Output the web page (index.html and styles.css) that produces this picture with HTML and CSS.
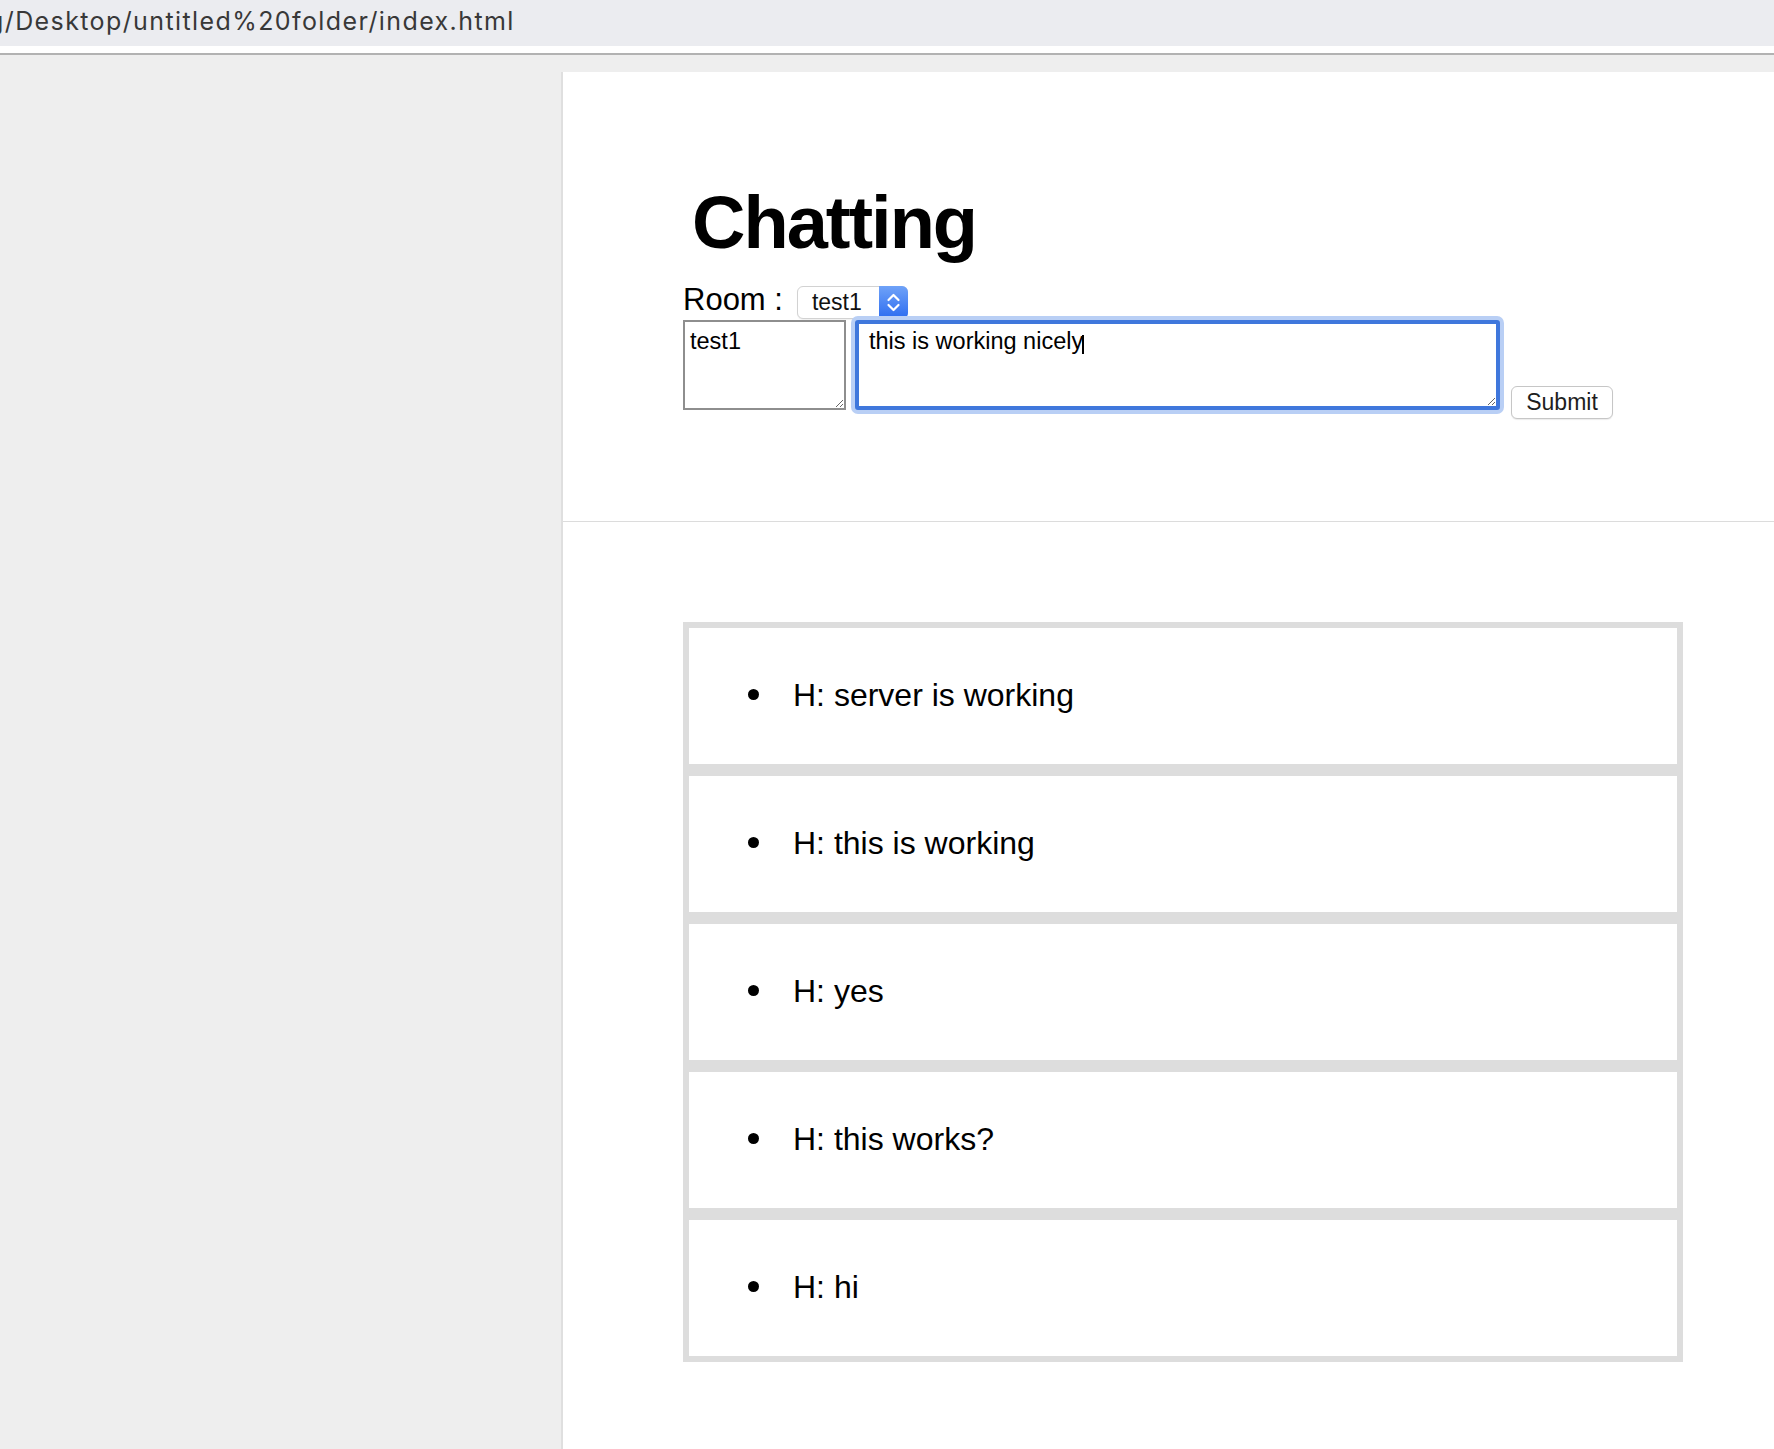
FILE: index.html
```html
<!DOCTYPE html>
<html lang="en">
<head>
<meta charset="utf-8">
<title>Chatting</title>
<link rel="stylesheet" href="styles.css">
</head>
<body>
<div class="topbar">
  <span class="url">g/Desktop/untitled%20folder/index.html</span>
</div>
<div class="viewport">
  <main class="panel">
    <header class="panel-head">
      <h1 class="title">Chatting</h1>
      <div class="room-row">
        <label class="room-label">Room :</label>
        <div class="select">
          <span class="select-value">test1</span>
          <span class="select-btn">
            <svg width="29" height="33" viewBox="0 0 29 33" aria-hidden="true">
              <polyline points="9.5,14 14.5,9 19.5,14" fill="none" stroke="#fff" stroke-width="2.2" stroke-linecap="round" stroke-linejoin="round"/>
              <polyline points="9.5,19 14.5,24 19.5,19" fill="none" stroke="#fff" stroke-width="2.2" stroke-linecap="round" stroke-linejoin="round"/>
            </svg>
          </span>
        </div>
      </div>
      <form class="compose">
        <textarea class="field field-name">test1</textarea>
        <div class="msg-wrap">
          <textarea class="field field-msg">this is working nicely</textarea>
          <span class="caret"></span>
        </div>
        <button class="submit" type="button">Submit</button>
      </form>
    </header>
    <section class="messages-area">
      <ul class="messages">
        <li class="message">H: server is working</li>
        <li class="message">H: this is working</li>
        <li class="message">H: yes</li>
        <li class="message">H: this works?</li>
        <li class="message">H: hi</li>
      </ul>
    </section>
  </main>
</div>
</body>
</html>
```
FILE: styles.css
```css
* { box-sizing: border-box; }

html, body {
  margin: 0;
  padding: 0;
}

body {
  background: #eeeeee;
  font-family: "Liberation Sans", Arial, sans-serif;
  color: #000;
  overflow: hidden;
  height: 1449px;
}

.topbar {
  height: 55px;
  background: #ffffff;
  border-bottom: 2px solid #b2b2b2;
}

.url {
  display: block;
  height: 46px;
  background: #ebecf0;
  font-family: "Inter", "Noto Sans", sans-serif;
  font-size: 25px;
  line-height: 42px;
  letter-spacing: 1.4px;
  color: #383838;
  white-space: nowrap;
  text-indent: -12px;
  overflow: hidden;
}

.viewport {
  padding: 17px 0 0 561px;
}

.panel {
  background: #ffffff;
  border-left: 2px solid #dfdfdf;
  min-height: calc(1449px - 72px);
}

.panel-head {
  padding: 114px 0 111px 120px;
  border-bottom: 1px solid #dcdcdc;
}

.title {
  margin: 0 0 0 9px;
  font-size: 74px;
  line-height: 74px;
  font-weight: bold;
  letter-spacing: -2px;
}

.room-row {
  display: flex;
  align-items: baseline;
  margin-top: 23px;
}

.room-label {
  font-size: 31px;
  line-height: 34px;
  margin-right: 14px;
}

.select {
  display: flex;
  width: 111px;
  height: 33px;
  border: 1px solid #d2d2d2;
  border-radius: 6px;
  background: #fff;
  font-size: 23px;
  line-height: 31px;
  color: #111;
  box-shadow: 0 1px 1px rgba(0,0,0,0.06);
}

.select-value {
  flex: 1;
  padding-left: 14px;
}

.select-btn {
  width: 29px;
  height: 33px;
  margin: -1px -1px -1px 0;
  border-radius: 0 6px 6px 0;
  background: linear-gradient(#6fa2f8, #2c6cf0);
  display: flex;
}

.compose {
  display: flex;
  align-items: flex-end;
  margin-top: 1px;
}

.field {
  height: 90px;
  margin: 0;
  font-family: "Liberation Sans", Arial, sans-serif;
  font-size: 23.5px;
  color: #000;
  background: #fff;
  outline: none;
}

.field-name {
  width: 163px;
  border: 2px solid #8e8e8e;
  padding: 6px 5px 4px;
}

.msg-wrap {
  position: relative;
  margin-left: 9px;
  display: flex;
}

.field-msg {
  width: 645px;
  border: 4px solid #3f77dc;
  border-radius: 3px;
  box-shadow: 0 0 0 4px #b9cff5;
  padding: 4px 10px 2px;
}

.caret {
  position: absolute;
  left: 227px;
  top: 15px;
  width: 1.5px;
  height: 19px;
  background: #000;
}

.submit {
  width: 102px;
  height: 33px;
  margin: 0 0 -9px 11px;
  padding: 0;
  border: 1px solid #c6c6c6;
  border-radius: 6px;
  background: #fff;
  box-shadow: 0 1px 1px rgba(0,0,0,0.08);
  font-family: "Liberation Sans", Arial, sans-serif;
  font-size: 23px;
  line-height: 31px;
  color: #1e1e1e;
}

.messages-area {
  padding: 100px 0 0 120px;
}

.messages {
  margin: 0;
  padding: 0;
  list-style: none;
  width: 1000px;
}

.message {
  border: 6px solid #dddddd;
  padding: 49px 0 50px 59px;
  font-size: 32px;
  line-height: 37px;
}

.message::before {
  content: "";
  display: inline-block;
  width: 11px;
  height: 11px;
  border-radius: 50%;
  background: #000;
  margin-right: 34px;
  vertical-align: 6px;
}
```
